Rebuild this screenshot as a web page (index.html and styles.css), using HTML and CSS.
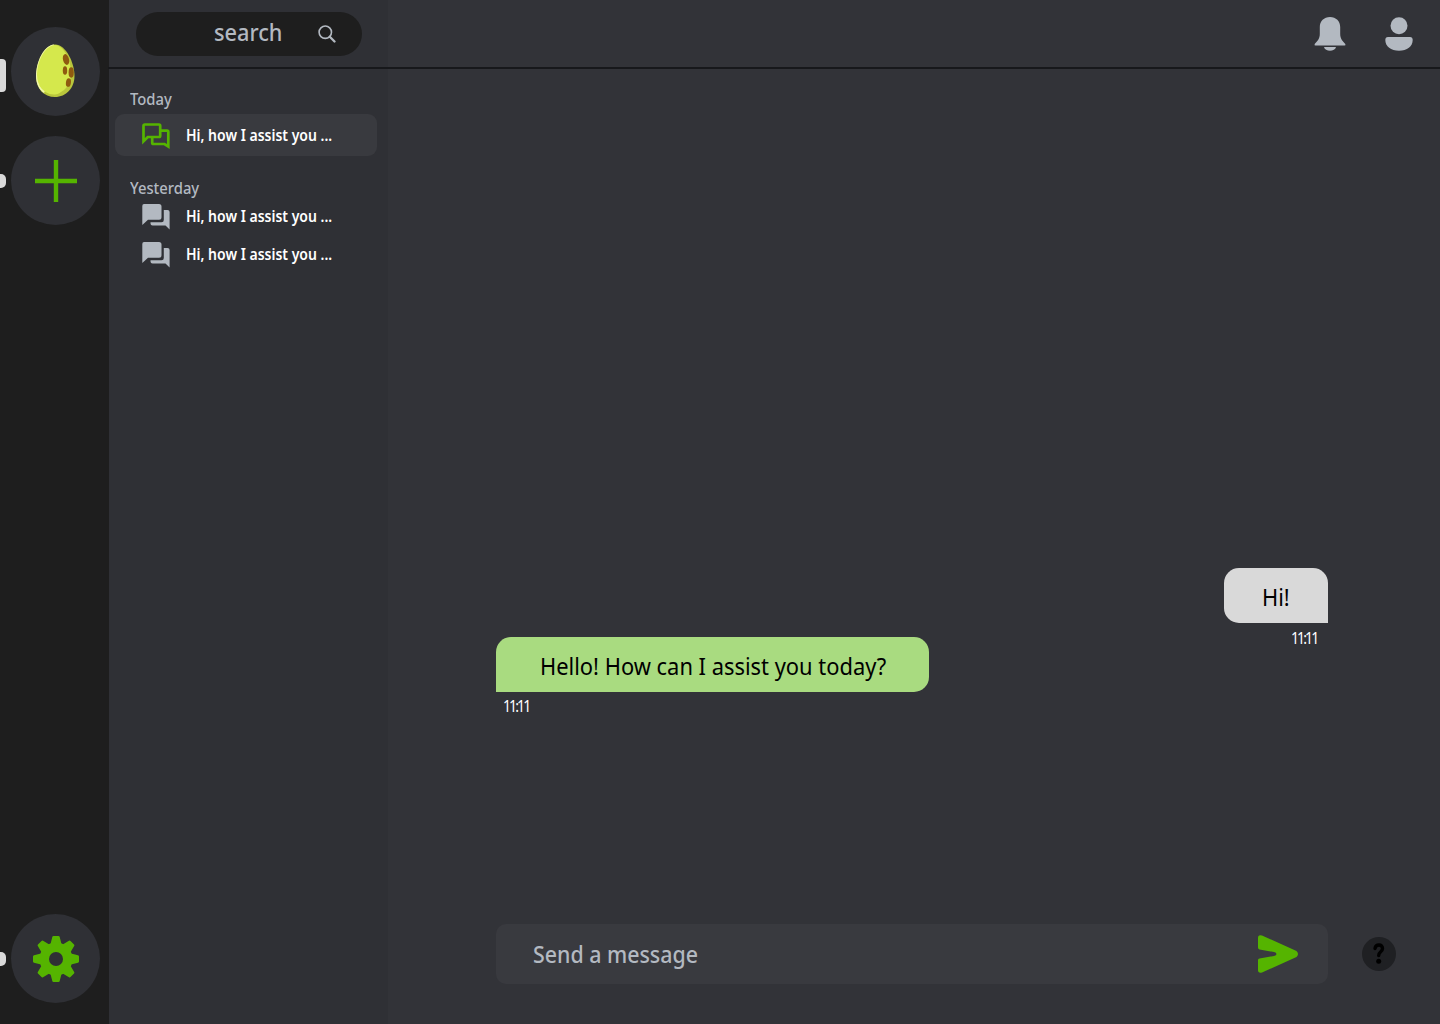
FILE: index.html
```html
<!DOCTYPE html>
<html lang="en">
<head>
<meta charset="utf-8">
<title>Chat</title>
<link rel="stylesheet" href="styles.css">
</head>
<body>
<svg class="defs" width="0" height="0" aria-hidden="true">
  <symbol id="forum" viewBox="0 0 28 28">
    <path d="M2 0H17Q19.500 0 19.500 2.500V13.200Q19.500 15.700 17 15.700H6L.3 21V2Q.3 0 2 0ZM21.800 6H25.500Q27.600 6 27.600 8V25.500L23.500 21.500H10.500Q8.500 21.500 8.500 19.500V18.200H19.500Q21.800 18.200 21.800 16Z"/>
  </symbol>
</svg>
<div class="app">
  <nav class="rail">
    <div class="slot"><span class="pill tall"></span>
      <button class="orb egg" aria-label="Home"><svg width="40" height="54" viewBox="0 0 40 54">
        <path fill="#b9c63c" d="M20 .5C31 .5 39.500 19 39.500 32C39.500 44 31 53 20 53C9 53 1 45 1 32C1 18 9 .5 20 .5Z"/>
        <path fill="#f2f7b0" d="M19 .5C9 1 1 18 1 32C1 39 4 46 9 49L18 30Z"/>
        <path fill="#d5e84c" d="M20 1C30 2 36 18 36 29C36 41 29 49.500 19 49.500C9 49.500 2 42 2 31C2 18 9 2 20 1Z"/>
        <path fill="#d5e84c" d="M4 41L28 44Q26 50 20 50.500Q10 51 4 41Z"/>
        <g fill="#8f5a10"><ellipse cx="31" cy="15.500" rx="3" ry="5.500" transform="rotate(-14 31 15.500)"/><ellipse cx="30" cy="26.500" rx="2.200" ry="4.300"/><ellipse cx="36.200" cy="28.500" rx="2.600" ry="5.200"/><ellipse cx="33.500" cy="38.500" rx="2.500" ry="4.300" transform="rotate(8 33 38)"/></g>
      </svg></button></div>
    <div class="slot"><span class="pill"></span>
      <button class="orb" aria-label="New chat"><svg width="42" height="42" viewBox="0 0 42 42"><path fill="#55b400" d="M18.800 0H23.200V18.800H42V23.200H23.200V42H18.800V23.200H0V18.800H18.800Z"/></svg></button></div>
    <div class="slot last"><span class="pill"></span>
      <button class="orb" aria-label="Settings"><svg width="46" height="46" viewBox="-23 -23 46 46">
        <g fill="#55b400"><path id="cog" d="M-5.500-15L-3.700-22Q-3.500-23-2.500-23H2.500Q3.500-23 3.700-22L5.500-15V15L3.700 22Q3.500 23 2.500 23H-2.500Q-3.500 23-3.700 22L-5.500 15Z"/><use href="#cog" transform="rotate(45)"/><use href="#cog" transform="rotate(90)"/><use href="#cog" transform="rotate(135)"/><circle r="16.500"/></g><circle r="7" fill="#2f3035"/>
      </svg></button></div>
  </nav>
  <div class="stage">
    <header class="top">
      <div class="search-area"><div class="search"><span class="t t-search">search</span>
        <svg width="18" height="18" viewBox="0 0 18 18" fill="none" stroke="#b3b9c1"><circle cx="7.300" cy="7.200" r="6.200" stroke-width="1.600"/><path d="M11.800 11.800L16.500 16.500" stroke-width="2.300" stroke-linecap="round"/></svg></div></div>
      <div class="actions">
        <svg width="32" height="35" viewBox="0 0 32 35" fill="#b3b9c1"><path d="M16 0C22 0 26.200 4.200 26.200 10V17C26.200 22 29 24.500 31.300 27Q32 28.500 30.500 28.500H1.500Q0 28.500.7 27C3 24.500 5.800 22 5.800 17V10C5.800 4.200 10 0 16 0ZM10 30H22C21 35 11 35 10 30Z"/></svg>
        <svg width="28" height="35" viewBox="0 0 28 35" fill="#b3b9c1"><circle cx="14" cy="8.700" r="8.500"/><path d="M3 20H25Q27.700 20 27.700 23C27.700 29.500 22 33.700 14 33.700C6 33.700 .3 29.500 .3 23Q.3 20 3 20Z"/></svg>
      </div>
    </header>
    <div class="content">
      <aside class="sidebar">
        <h2 class="day"><span class="t t-day">Today</span></h2>
        <div class="chat active"><svg width="28" height="28" viewBox="0 0 28 28" fill="none" stroke="#55b400" stroke-width="2.700"><path d="M1.500 18.200V2.800Q1.500 1.500 2.800 1.500H17Q18.200 1.500 18.200 2.700V12.700Q18.200 14 17 14H5.800ZM19 7.700H25Q26.300 7.700 26.300 9V23.500L22.500 21H11.500Q10.200 21 10.200 19.700V14"/></svg><span class="t t-chat">Hi, how I assist you ...</span></div>
        <h2 class="day yesterday"><span class="t t-day">Yesterday</span></h2>
        <div class="chat"><svg width="28" height="28" fill="#b3b9c1"><use href="#forum"/></svg><span class="t t-chat">Hi, how I assist you ...</span></div>
        <div class="chat"><svg width="28" height="28" fill="#b3b9c1"><use href="#forum"/></svg><span class="t t-chat">Hi, how I assist you ...</span></div>
      </aside>
      <main class="main">
        <div class="messages">
          <div class="msg mine"><div class="bubble"><span class="t t-msg">Hi!</span></div><time><span class="t t-time">11:11</span></time></div>
          <div class="msg theirs"><div class="bubble"><span class="t t-msg">Hello! How can I assist you today?</span></div><time><span class="t t-time">11:11</span></time></div>
        </div>
        <div class="footer">
          <div class="composer"><span class="t t-send">Send a message</span>
            <svg width="41" height="38" viewBox="0 0 41 38" fill="#55b400"><path d="M0 3Q0-.9 4 .5L38.500 16Q41.500 19 38.500 22L4 37.500Q0 38.500 0 35V25Q0 23.700 1.500 23.500L16 21Q18.500 20.500 18.500 19Q18.500 17.500 16 17L1.500 14.500Q0 14 0 12.500Z"/></svg></div>
          <button class="help" aria-label="Help"><svg width="12" height="22" viewBox="0 0 12 22"><path d="M2 5.500Q2.500 2 6 2Q9.500 2 9.500 5.500Q9.500 7.500 7.500 9Q5.700 10.500 5.700 12.500" fill="none" stroke="#000" stroke-width="3.400" stroke-linecap="round"/><circle cx="5.700" cy="18.300" r="2.500"/></svg></button>
        </div>
      </main>
    </div>
  </div>
</div>
</body>
</html>
```
FILE: styles.css
```css
* { box-sizing: border-box; }
body { margin: 0; background: #323338; font-family: "Noto Sans", sans-serif; color: #fff; }
button { border: 0; padding: 0; }
svg { display: block; flex: none; }
.defs { position: absolute; }
.app { display: flex; width: 1440px; height: 1024px; overflow: hidden; }
.rail { width: 109px; background: #1e1e1e; display: flex; flex-direction: column; gap: 20px; padding: 27px 0 21px; }
.slot { display: flex; align-items: center; gap: 5px; height: 89px; }
.last { margin-top: auto; }
.pill { width: 6px; height: 14px; background: #d9d9d9; border-radius: 0 5px 5px 0; }
.pill.tall { height: 33px; margin-top: 8px; border-radius: 0 4px 4px 0; }
.orb { width: 89px; height: 89px; border-radius: 50%; background: #2f3035; display: grid; place-items: center; }
.egg { padding: 0 2px 1px 0; }
.stage { flex: 1; display: flex; flex-direction: column; }
.top { height: 69px; display: flex; margin-left: -1px; padding-left: 1px; border-bottom: 2px solid #17181b; }
.search-area { width: 279px; background: #2f3035; padding: 12px 0 0 27px; }
.search { width: 226px; height: 44px; border-radius: 22px; background: #1e1e1e; display: flex; align-items: center; padding-left: 78px; }
.search svg { margin-left: 34px; }
.actions { margin-left: auto; display: flex; gap: 39px; padding: 17px 27px 0 0; }
.content { flex: 1; display: flex; }
.sidebar { width: 279px; background: #2f3035; padding: 20px 11px 0 6px; }
.main { flex: 1; display: flex; flex-direction: column; padding: 499px 44px 40px 108px; }

/* Condensed text: narrowed horizontally from the left edge */
.t { display: block; white-space: nowrap; transform-origin: 0 50%; }
.t-search { width: 70px; font-size: 24px; font-weight: 550; line-height: 42px; margin-top: -4px; color: #b3b9c1; transform: scaleX(.905); }
.t-day { font-size: 16px; font-weight: 500; line-height: 21px; transform: scaleX(.925); }
.t-chat { font-size: 16px; font-weight: 600; line-height: 22px; transform: scaleX(.875); }
.t-msg { font-size: 24px; font-weight: 400; line-height: 57px; color: #000; transform: scaleX(.912); }
.t-time { font-size: 16px; line-height: 21px; letter-spacing: -2.2px; transform: scaleX(.88); }
.t-send { font-size: 24px; font-weight: 550; color: #b3b9c1; line-height: 60px; transform: scaleX(.89); }

.day { margin: 0; height: 25px; padding-left: 15px; color: #b3b9c1; }
.yesterday { margin-top: 22px; height: 19px; }
.chat { height: 38px; display: flex; align-items: center; gap: 16px; padding-left: 27px; }
.chat svg { margin-top: 3px; }
.active { height: 42px; border-radius: 9px; background: #393a3f; }
.messages { display: flex; flex-direction: column; width: 832px; }
.msg { display: flex; flex-direction: column; height: 69px; }
.bubble { height: 55px; }
.mine { align-self: flex-end; width: 104px; }
.mine .bubble { background: #d9d9d9; border-radius: 15px 15px 0 15px; padding-left: 38px; }
.mine time { padding: 5px 0 0 67px; }
.theirs { width: 433px; }
.theirs .bubble { background: #a9db80; border-radius: 15px 15px 15px 0; padding-left: 43.5px; }
.theirs time { padding: 4px 0 0 7px; }
.footer { margin-top: auto; display: flex; align-items: center; justify-content: space-between; }
.composer { width: 832px; height: 60px; border-radius: 10px; background: #393a3f; display: flex; align-items: center; justify-content: space-between; padding: 0 29px 0 37px; }
.help { width: 34px; height: 34px; border-radius: 50%; background: #1f2023; display: grid; place-items: center; }
```
